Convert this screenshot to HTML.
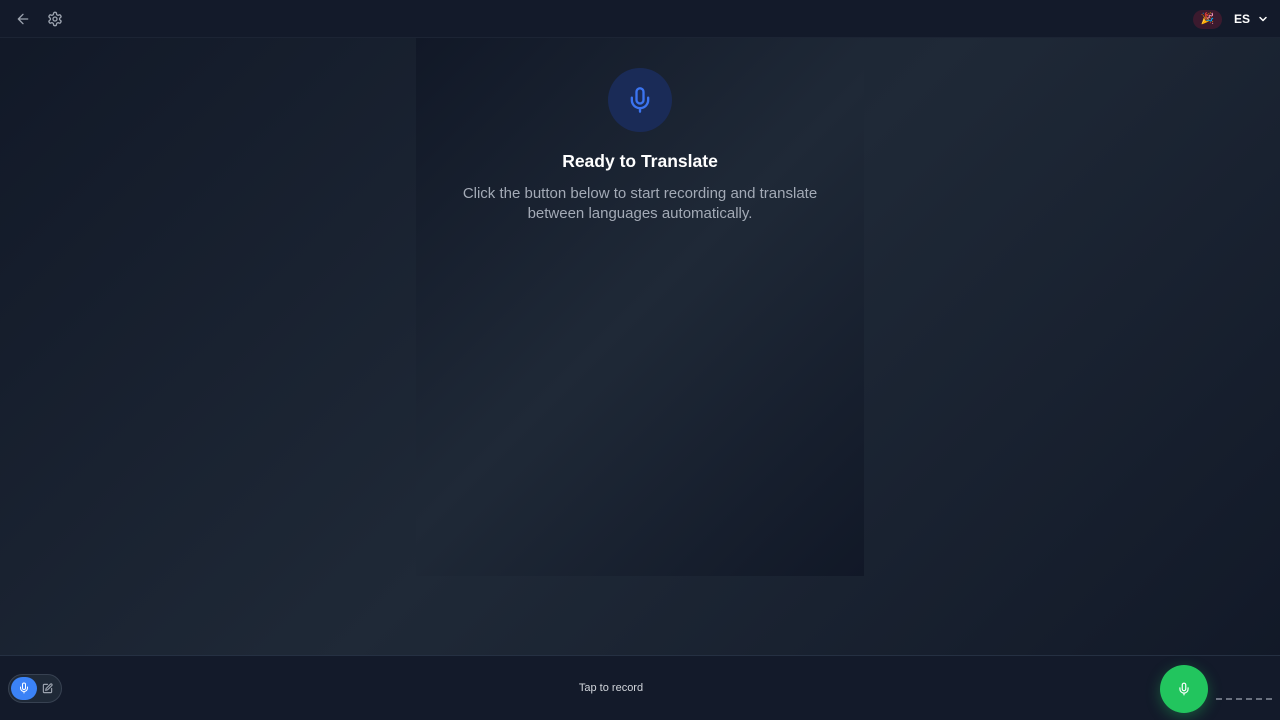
<!DOCTYPE html>
<html><head><meta charset="utf-8"><style>
*{margin:0;padding:0;box-sizing:border-box}
body{width:1280px;height:720px;overflow:hidden;font-family:"Liberation Sans",sans-serif;background:linear-gradient(135deg,#111827 0%,#1f2937 50%,#111827 100%);position:relative}
.hdr{position:absolute;left:0;top:0;width:1280px;height:38px;background:#131a2a;border-bottom:1px solid #1c2434}
.panel{position:absolute;left:416px;top:38px;width:448px;height:538px;background:linear-gradient(135deg,#111827 0%,#1f2937 50%,#111827 100%)}
.ftr{position:absolute;left:0;top:655px;width:1280px;height:65px;background:#131a2a;border-top:1px solid #253042}
</style></head><body>
<div class="hdr">
<svg style="position:absolute;left:15px;top:11px" width="16" height="16" viewBox="0 0 24 24" fill="none" stroke="#9ca3af" stroke-width="2" stroke-linecap="round" stroke-linejoin="round"><path d="M19 12H5M12 19l-7-7 7-7"/></svg>
<svg style="position:absolute;left:47px;top:11px" width="16" height="16" viewBox="0 0 24 24" fill="none" stroke="#9ca3af" stroke-width="2" stroke-linecap="round" stroke-linejoin="round"><path d="M12.22 2h-.44a2 2 0 0 0-2 2v.18a2 2 0 0 1-1 1.73l-.43.25a2 2 0 0 1-2 0l-.15-.08a2 2 0 0 0-2.730.73l-.22.38a2 2 0 0 0 .73 2.73l.15.1a2 2 0 0 1 1 1.72v.51a2 2 0 0 1-1 1.740l-.15.09a2 2 0 0 0-.73 2.73l.22.38a2 2 0 0 0 2.73.73l.15-.08a2 2 0 0 1 2 0l.43.25a2 2 0 0 1 1 1.73V20a2 2 0 0 0 2 2h.44a2 2 0 0 0 2-2v-.18a2 2 0 0 1 1-1.73l.43-.25a2 2 0 0 1 2 0l.15.08a2 2 0 0 0 2.73-.73l.22-.39a2 2 0 0 0-.73-2.73l-.15-.08a2 2 0 0 1-1-1.74v-.5a2 2 0 0 1 1-1.74l.15-.09a2 2 0 0 0 .73-2.73l-.22-.38a2 2 0 0 0-2.73-.73l-.15.08a2 2 0 0 1-2 0l-.43-.25a2 2 0 0 1-1-1.73V4a2 2 0 0 0-2-2z"/><circle cx="12" cy="12" r="3"/></svg>
<div style="position:absolute;left:1193px;top:10px;width:29px;height:19px;border-radius:10px;background:#3b1a2e;font-size:11px;line-height:19px;text-align:center">🎉</div>
<div style="position:absolute;left:1234px;top:12px;color:#fff;font-weight:bold;font-size:12px">ES</div>
<svg style="position:absolute;left:1257px;top:13px" width="12" height="12" viewBox="0 0 24 24" fill="none" stroke="#fff" stroke-width="3" stroke-linecap="round" stroke-linejoin="round"><path d="M6 9l6 6 6-6"/></svg>
</div>
<div class="panel"></div>
<div style="position:absolute;left:608px;top:68px;width:64px;height:64px;border-radius:50%;background:#1a2b57"></div>
<svg style="position:absolute;left:626px;top:86px" width="28" height="28" viewBox="0 0 24 24" fill="none" stroke="#3b74f0" stroke-width="2" stroke-linecap="round" stroke-linejoin="round"><path d="M12 2a3 3 0 0 0-3 3v7a3 3 0 0 0 6 0V5a3 3 0 0 0-3-3z"/><path d="M19 10v2a7 7 0 0 1-14 0v-2M12 19v3"/></svg>
<div style="position:absolute;left:416px;top:151px;width:448px;text-align:center;color:#fff;font-weight:bold;font-size:17.5px">Ready to Translate</div>
<div style="position:absolute;left:416px;top:184px;width:448px;text-align:center;color:#a3aab6;font-size:15px;line-height:20px">Click the button below to start recording and translate<br>between languages automatically.</div>
<div class="ftr">
<div style="position:absolute;left:8px;top:18px;width:54px;height:29px;border-radius:15px;background:#1f2937;border:1px solid #374151"></div>
<div style="position:absolute;left:11px;top:21px;width:26px;height:23px;border-radius:12px;background:#3b82f6"></div>
<svg style="position:absolute;left:18px;top:26px" width="12" height="12" viewBox="0 0 24 24" fill="none" stroke="#fff" stroke-width="2" stroke-linecap="round"><path d="M12 2a3 3 0 0 0-3 3v7a3 3 0 0 0 6 0V5a3 3 0 0 0-3-3z"/><path d="M19 10v2a7 7 0 0 1-14 0v-2M12 19v3"/></svg>
<svg style="position:absolute;left:42px;top:27px" width="11" height="11" viewBox="0 0 24 24" fill="none" stroke="#9ca3af" stroke-width="2.5" stroke-linecap="round" stroke-linejoin="round"><path d="M12 3H5a2 2 0 0 0-2 2v14a2 2 0 0 0 2 2h14a2 2 0 0 0 2-2v-7"/><path d="M18.4 2.6a2 2 0 0 1 3 3L12 15l-4 1 1-4z"/></svg>
<div style="position:absolute;left:560px;top:26px;width:102px;text-align:center;color:#d1d5db;font-size:11px">Tap to record</div>
<div style="position:absolute;left:1160px;top:9px;width:48px;height:48px;border-radius:50%;background:#22c55e;box-shadow:0 4px 14px rgba(34,197,94,.35)"></div>
<svg style="position:absolute;left:1177px;top:26px" width="14" height="14" viewBox="0 0 24 24" fill="none" stroke="#fff" stroke-width="2" stroke-linecap="round"><path d="M12 2a3 3 0 0 0-3 3v7a3 3 0 0 0 6 0V5a3 3 0 0 0-3-3z"/><path d="M19 10v2a7 7 0 0 1-14 0v-2M12 19v3"/></svg>
<div style="position:absolute;left:1216px;top:42px;width:56px;border-top:2px dashed #6b7280"></div>
</div>
</body></html>
